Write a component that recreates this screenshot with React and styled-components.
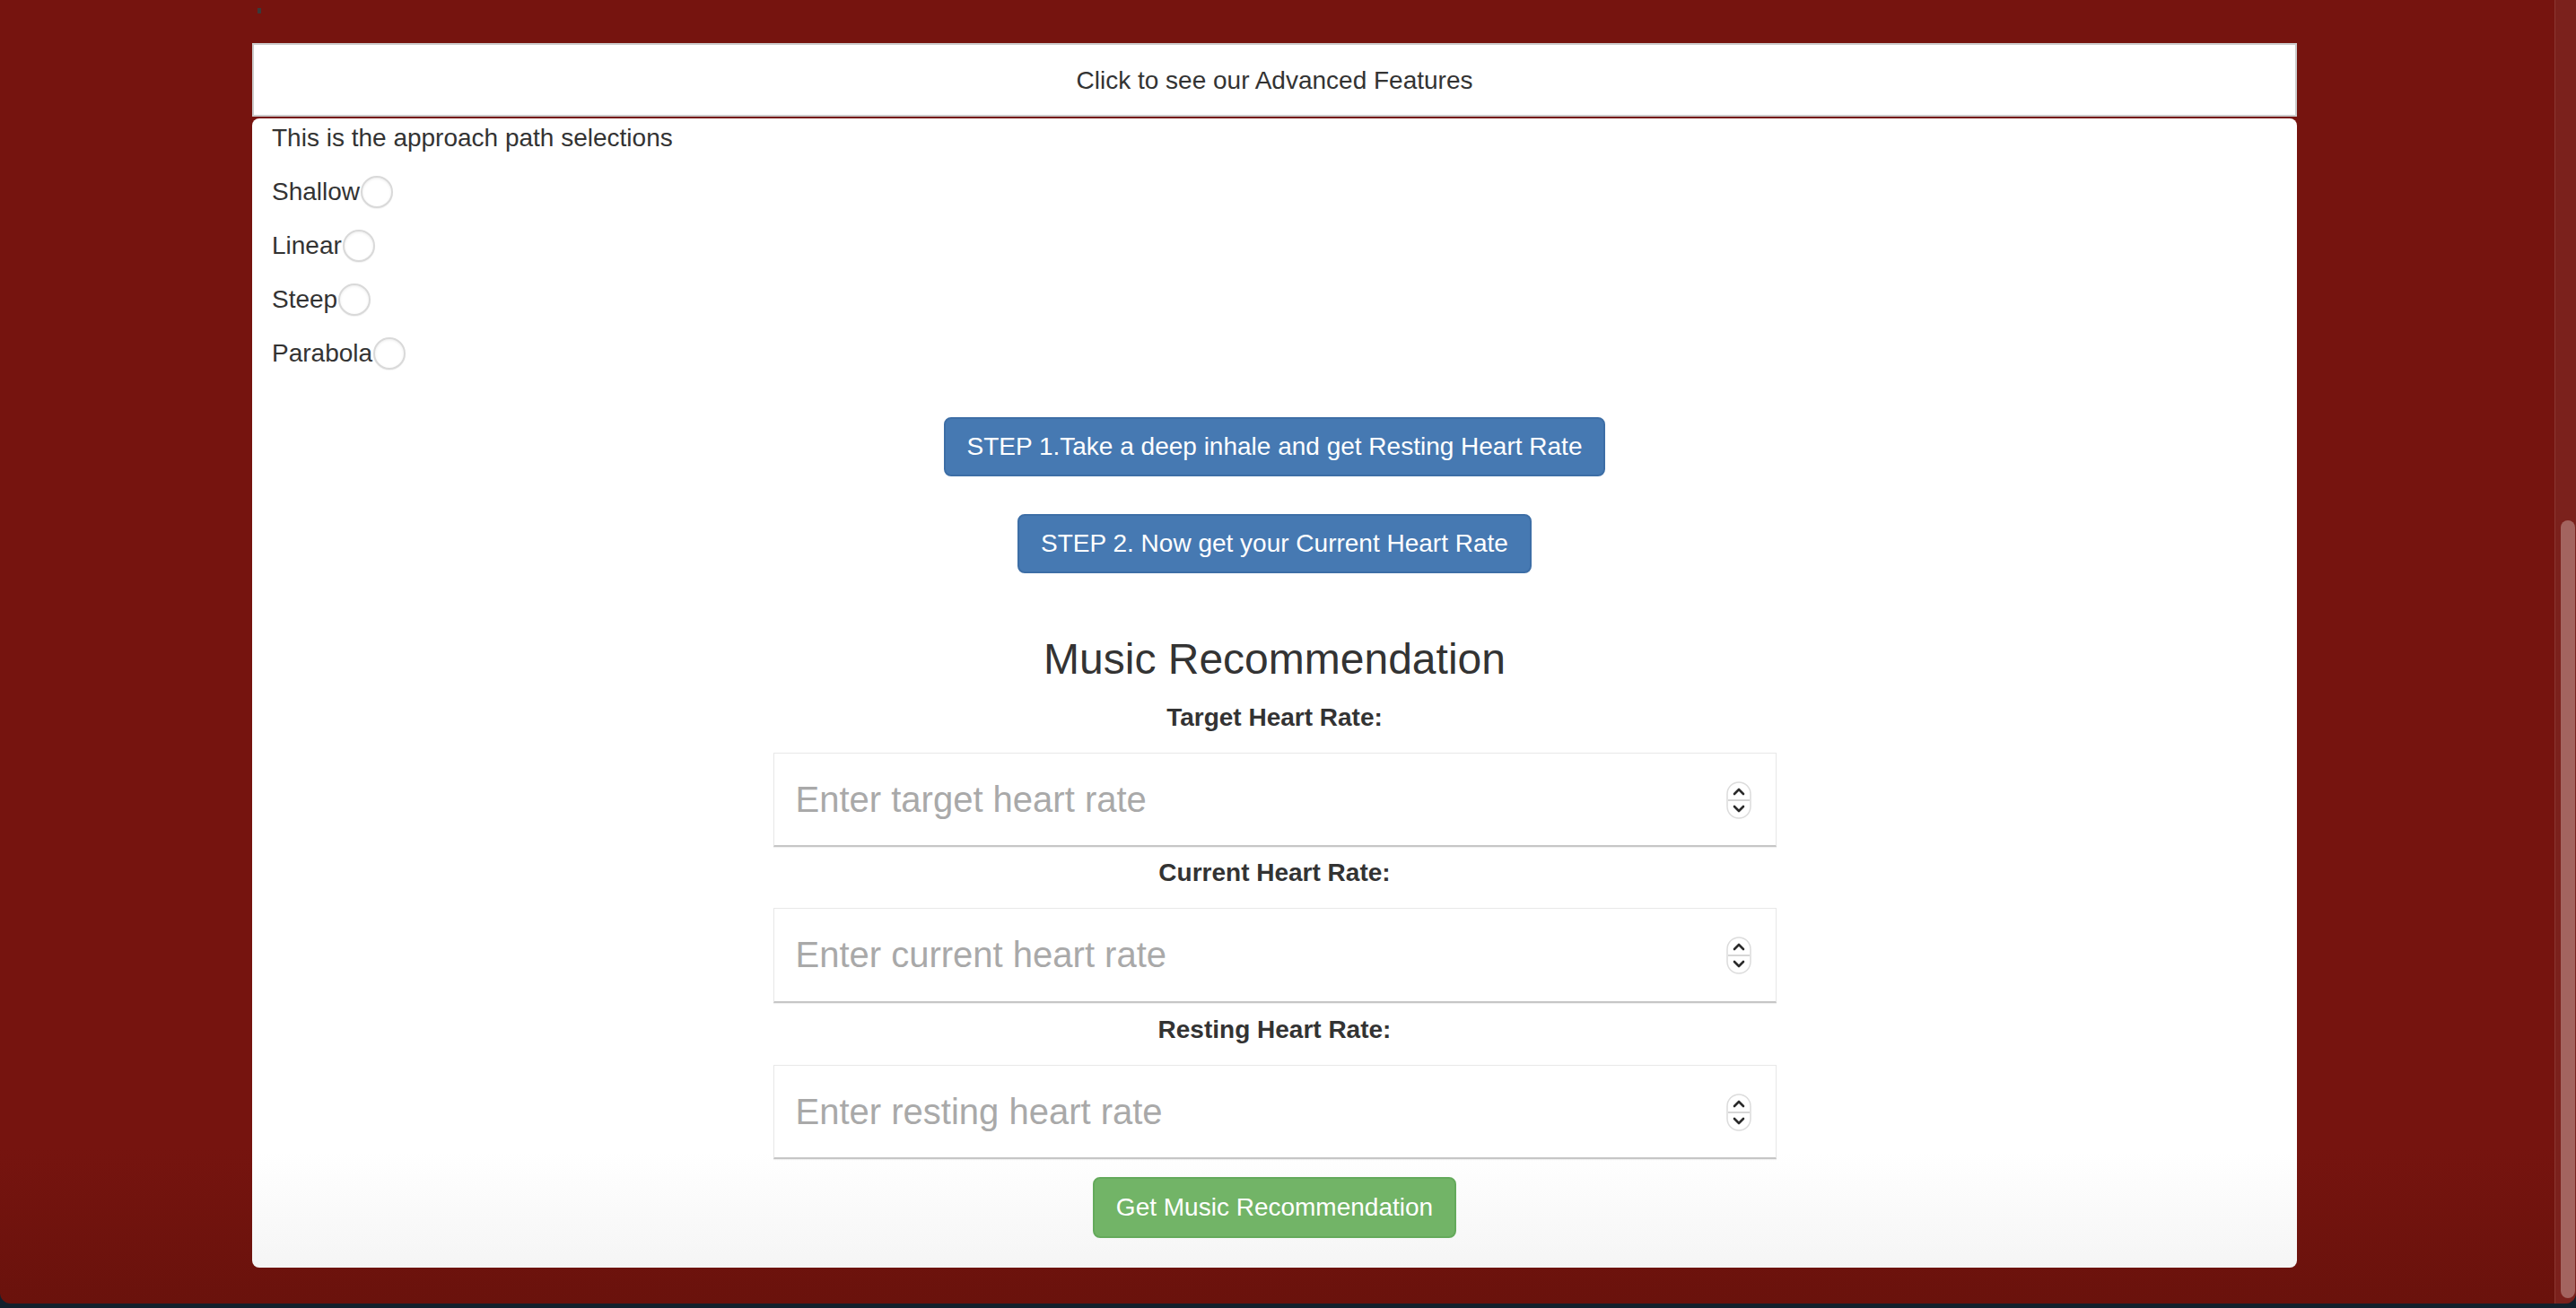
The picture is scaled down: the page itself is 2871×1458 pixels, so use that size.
import React from 'react';
import styled, { createGlobalStyle } from 'styled-components';

const GlobalStyle = createGlobalStyle`
    html, body {
        margin: 0;
        padding: 0;
        background: #13202c;
        font-family: "Liberation Sans", Arial, Helvetica, sans-serif;
        color: #333;
    }
    * {
        box-sizing: border-box;
    }
`;

const Window = styled.div`
    display: flex;
    height: 1453px;
    background: linear-gradient(180deg, #76140f 0%, #76140f 88%, #6a120c 100%);
    border-radius: 0 0 12px 12px;
    overflow: hidden;
`;

const Page = styled.main`
    flex: 1;
    padding-left: 281px;
    padding-right: 287px;
`;

const Mark = styled.span`
    display: block;
    width: 4px;
    height: 6px;
    margin: 9px 0 0 6px;
    background: #3a3a3a;
`;

const Accordion = styled.div`
    margin-top: 33px;
    height: 82px;
    display: flex;
    align-items: center;
    justify-content: center;
    padding-top: 2px;
    background: #fff;
    border: 2px solid #cccccc;
    font-size: 28px;
    color: #333;
    cursor: pointer;
`;

const Panel = styled.section`
    margin-top: 2px;
    height: 1281px;
    padding: 2px 22px 0;
    background: linear-gradient(180deg, #ffffff 0%, #ffffff 90%, #f5f5f5 100%);
    border-radius: 8px;
    display: flex;
    flex-direction: column;
`;

const Intro = styled.p`
    margin: 0 0 10px;
    font-size: 28px;
    line-height: 40px;
    color: #333;
`;

const RadioRow = styled.label`
    display: flex;
    align-items: center;
    height: 60px;
    font-size: 28px;
    color: #333;
`;

const Radio = styled.input`
    appearance: none;
    width: 36px;
    height: 36px;
    margin: 0 0 0 1px;
    border-radius: 50%;
    border: 2px solid #d9d9d9;
    background: #fff;
    box-shadow: inset 0 1px 3px rgba(0, 0, 0, 0.08), 0 1px 1px rgba(0, 0, 0, 0.05);
`;

const Center = styled.div`
    display: flex;
    flex-direction: column;
    align-items: center;
`;

const Btn = styled.button`
    font-family: inherit;
    font-size: 28px;
    line-height: 40px;
    padding: ${({ success }) => (success ? '12px' : '11px')} 24px;
    color: #fff;
    border-radius: 8px;
    border: 2px solid ${({ success }) => (success ? '#64aa5b' : '#3d6ea6')};
    background: ${({ success }) => (success ? '#72b467' : '#4679b2')};
    margin-top: ${({ top }) => top}px;
    cursor: pointer;
`;

const Heading = styled.h3`
    margin: 69px 0 0;
    font-size: 48px;
    line-height: 53px;
    font-weight: 500;
    color: #333;
`;

const FieldLabel = styled.label`
    margin-top: ${({ top }) => top}px;
    font-size: 28px;
    line-height: 40px;
    font-weight: bold;
    color: #333;
`;

const InputWrap = styled.div`
    position: relative;
    width: 1118px;
    margin-top: ${({ top }) => top}px;
`;

const NumberInput = styled.input`
    width: 100%;
    height: ${({ h }) => h}px;
    padding: 0 80px 0 24px;
    font-family: inherit;
    font-size: 40px;
    color: #333;
    background: #fff;
    border: 1px solid #e8e8e8;
    border-bottom: 2px solid #c6c6c6;
    box-shadow: 0 1px 1px rgba(0, 0, 0, 0.06);
    outline: none;

    &::placeholder {
        color: #a9a9a9;
    }
    &::-webkit-inner-spin-button,
    &::-webkit-outer-spin-button {
        -webkit-appearance: none;
        margin: 0;
    }
`;

const Spinner = styled.svg`
    position: absolute;
    right: 28px;
    top: 50%;
    transform: translateY(-50%);
`;

const Scrollbar = styled.aside`
    width: 24px;
    background: #7b211c;
    border-left: 1px solid #8b3731;
    padding: 580px 1px 6px 6px;
    display: flex;
`;

const Thumb = styled.div`
    flex: 1;
    background: #a3645f;
    border-radius: 8px;
`;

const SpinIcon = () => (
    <Spinner width="28" height="42" viewBox="0 0 28 42">
        <rect x="1" y="1" width="26" height="40" rx="13" fill="#fff" stroke="#dcdcdc" strokeWidth="1.5" />
        <line x1="2" y1="21" x2="26" y2="21" stroke="#d6d6d6" strokeWidth="2" />
        <path d="M9 14 L14 9 L19 14" fill="none" stroke="#2b2b2b" strokeWidth="2.6" strokeLinecap="round" strokeLinejoin="round" />
        <path d="M9 28 L14 33 L19 28" fill="none" stroke="#2b2b2b" strokeWidth="2.6" strokeLinecap="round" strokeLinejoin="round" />
    </Spinner>
);

const paths = ['Shallow', 'Linear', 'Steep', 'Parabola'];

const fields = [
    { label: 'Target Heart Rate:', placeholder: 'Enter target heart rate', labelTop: 19, h: 105 },
    { label: 'Current Heart Rate:', placeholder: 'Enter current heart rate', labelTop: 9, h: 106 },
    { label: 'Resting Heart Rate:', placeholder: 'Enter resting heart rate', labelTop: 10, h: 105 },
];

export default function App() {
    return (
        <>
            <GlobalStyle />
            <Window>
                <Page>
                    <Mark />
                    <Accordion>Click to see our Advanced Features</Accordion>
                    <Panel>
                        <Intro>This is the approach path selections</Intro>
                        {paths.map((p) => (
                            <RadioRow key={p}>
                                {p}
                                <Radio type="radio" name="approach" value={p.toLowerCase()} />
                            </RadioRow>
                        ))}
                        <Center>
                            <Btn top={41}>STEP 1.Take a deep inhale and get Resting Heart Rate</Btn>
                            <Btn top={42}>STEP 2. Now get your Current Heart Rate</Btn>
                            <Heading>Music Recommendation</Heading>
                            {fields.map((f) => (
                                <React.Fragment key={f.label}>
                                    <FieldLabel top={f.labelTop}>{f.label}</FieldLabel>
                                    <InputWrap top={19}>
                                        <NumberInput type="number" placeholder={f.placeholder} h={f.h} />
                                        <SpinIcon />
                                    </InputWrap>
                                </React.Fragment>
                            ))}
                            <Btn success top={20}>Get Music Recommendation</Btn>
                        </Center>
                    </Panel>
                </Page>
                <Scrollbar>
                    <Thumb />
                </Scrollbar>
            </Window>
        </>
    );
}
